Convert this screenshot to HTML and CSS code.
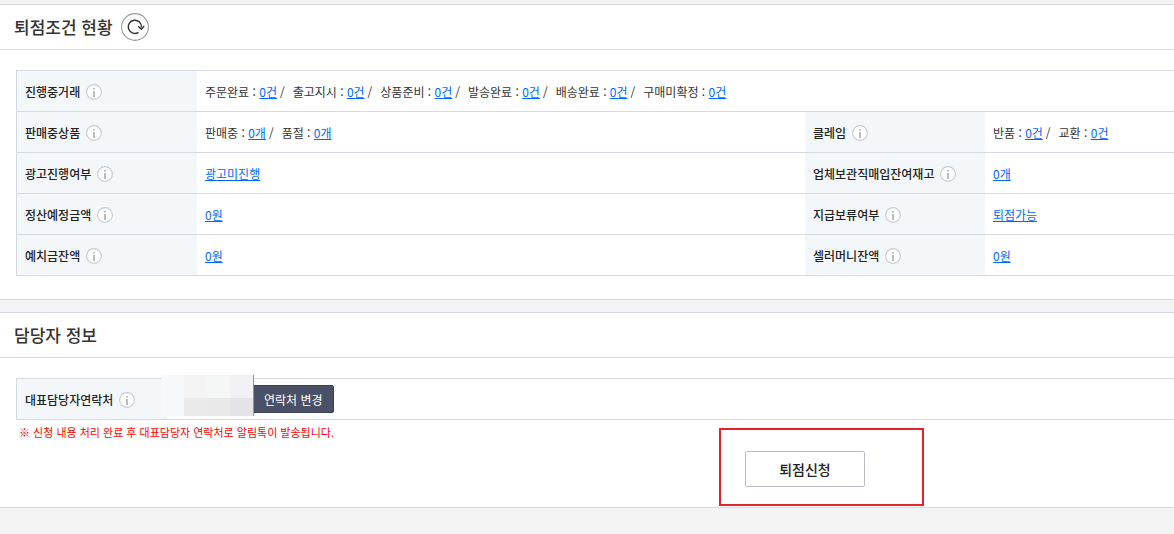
FILE: index.html
```html
<!DOCTYPE html>
<html lang="ko">
<head>
    <meta charset="UTF-8">
    <meta name="viewport" content="width=device-width, initial-scale=1.0">
    <title>퇴점조건 현황</title>
    <link rel="stylesheet" href="styles.css">
</head>
<body>
    <svg class="symbols" aria-hidden="true">
        <symbol id="info" viewBox="0 0 16 16">
            <circle cx="8" cy="8" r="7.4" fill="#fff" stroke="#c5cad6" stroke-width="1.1"/>
            <path d="M7 4h2v1.6H7zM7 7h2v6H7z" fill="#bbb"/>
        </symbol>
    </svg>

    <section class="panel">
        <div class="panel-head">
            <h2>퇴점조건 현황</h2>
            <button type="button" class="refresh" aria-label="새로고침">
                <svg width="28" height="28" viewBox="0 0 28 28" fill="none">
                    <circle cx="14" cy="14" r="13.4" stroke="#999" stroke-width="1.1"/>
                    <path d="M17.5 19.3A6.6 6.6 0 1 1 20.4 14.5" stroke="#333" stroke-width="1.4"/>
                    <path d="M17.2 13.2L20.4 16.2L23.2 13" stroke="#333" stroke-width="1.4"/>
                </svg>
            </button>
        </div>
        <div class="panel-body">
            <table class="info-table">
                <colgroup>
                    <col class="col-label">
                    <col class="col-value">
                    <col class="col-label">
                    <col>
                </colgroup>
                <tr>
                    <th scope="row">진행중거래<svg class="tip"><use href="#info"/></svg></th>
                    <td colspan="3">
                        <ul class="counts">
                            <li>주문완료 : <a href="#">0건</a></li>
                            <li>출고지시 : <a href="#">0건</a></li>
                            <li>상품준비 : <a href="#">0건</a></li>
                            <li>발송완료 : <a href="#">0건</a></li>
                            <li>배송완료 : <a href="#">0건</a></li>
                            <li>구매미확정 : <a href="#">0건</a></li>
                        </ul>
                    </td>
                </tr>
                <tr>
                    <th scope="row">판매중상품<svg class="tip"><use href="#info"/></svg></th>
                    <td>
                        <ul class="counts">
                            <li>판매중 : <a href="#">0개</a></li>
                            <li>품절 : <a href="#">0개</a></li>
                        </ul>
                    </td>
                    <th scope="row">클레임<svg class="tip"><use href="#info"/></svg></th>
                    <td>
                        <ul class="counts">
                            <li>반품 : <a href="#">0건</a></li>
                            <li>교환 : <a href="#">0건</a></li>
                        </ul>
                    </td>
                </tr>
                <tr>
                    <th scope="row">광고진행여부<svg class="tip"><use href="#info"/></svg></th>
                    <td><a href="#">광고미진행</a></td>
                    <th scope="row">업체보관직매입잔여재고<svg class="tip"><use href="#info"/></svg></th>
                    <td><a href="#">0개</a></td>
                </tr>
                <tr>
                    <th scope="row">정산예정금액<svg class="tip"><use href="#info"/></svg></th>
                    <td><a href="#">0원</a></td>
                    <th scope="row">지급보류여부<svg class="tip"><use href="#info"/></svg></th>
                    <td><a href="#">퇴점가능</a></td>
                </tr>
                <tr>
                    <th scope="row">예치금잔액<svg class="tip"><use href="#info"/></svg></th>
                    <td><a href="#">0원</a></td>
                    <th scope="row">셀러머니잔액<svg class="tip"><use href="#info"/></svg></th>
                    <td><a href="#">0원</a></td>
                </tr>
            </table>
        </div>
    </section>

    <section class="panel panel-contact">
        <div class="panel-head">
            <h2>담당자 정보</h2>
        </div>
        <div class="panel-body">
            <table class="info-table">
                <colgroup>
                    <col class="col-contact">
                    <col>
                </colgroup>
                <tr>
                    <th scope="row">대표담당자연락처<svg class="tip"><use href="#info"/></svg></th>
                    <td>
                        <div class="contact">
                            <!-- masked phone number -->
                            <svg class="mask" width="93" height="41" shape-rendering="crispEdges">
                                <path d="M0 0h23v41H0z" fill="#f7f8fa"/>
                                <path d="M23 0h23v23H23z" fill="#f4f4f4"/>
                                <path d="M46 0h23v23H46z" fill="#f5f6f6"/>
                                <path d="M69 0h23v23H69z" fill="#f2f2f4"/>
                                <path d="M23 23h23v18H23z" fill="#eaeaea"/>
                                <path d="M46 23h23v18H46z" fill="#e9e9e9"/>
                                <path d="M69 23h23v18H69z" fill="#e4e3e8"/>
                                <path d="M92 0h1v41h-1z" fill="#8f939e"/>
                            </svg>
                            <button type="button" class="btn-dark">연락처 변경</button>
                        </div>
                    </td>
                </tr>
            </table>
            <div class="panel-foot">
                <p class="notice">※ 신청 내용 처리 완료 후 대표담당자 연락처로 알림톡이 발송됩니다.</p>
                <div class="highlight">
                    <button type="button" class="btn-line">퇴점신청</button>
                </div>
            </div>
        </div>
    </section>
</body>
</html>
```
FILE: styles.css
```css
* {
    box-sizing: border-box;
}

body {
    margin: 0;
    padding-top: 4px;
    background-color: #f4f4f4;
    color: #333;
    font-family: "Noto Sans CJK KR", sans-serif;
    font-size: 12px;
    line-height: 20px;
}

button {
    font-family: inherit;
    cursor: pointer;
}

a {
    color: #0068ff;
    text-decoration: underline;
}

.symbols {
    display: none;
}

.panel {
    margin-bottom: 12px;
    border-top: 1px solid #d5d9e0;
    border-bottom: 1px solid #d5d9e0;
    background-color: #fff;
}

.panel-head {
    display: flex;
    align-items: center;
    gap: 8px;
    height: 45px;
    padding-left: 14px;
    border-bottom: 1px solid #d5d9e0;
}

.panel-head h2 {
    margin: 0;
    font-size: 17px;
    font-weight: 500;
    color: #333;
}

.refresh {
    display: flex;
    padding: 0;
    border: 0;
    background: none;
}

.panel-body {
    padding: 20px 0 23px 16px;
}

.info-table {
    width: 100%;
    table-layout: fixed;
    border-collapse: separate;
    border-spacing: 0;
    border-top: 1px solid #d5d9e0;
    border-left: 1px solid #d5d9e0;
}

.info-table th,
.info-table td {
    height: 41px;
    padding: 2px 8px 0;
    border-bottom: 1px solid #d5d9e0;
    text-align: left;
    vertical-align: middle;
}

.info-table th {
    background-color: #f3f7fa;
    color: #222;
    font-weight: 500;
    white-space: nowrap;
}

.col-label {
    width: 180px;
}

.col-value {
    width: 608px;
}

.col-contact {
    width: 150px;
}

.tip {
    width: 16px;
    height: 16px;
    margin-left: 6px;
    vertical-align: -3px;
}

.counts {
    display: flex;
    margin: 0;
    padding: 0;
    list-style: none;
}

.counts li + li::before {
    content: "/";
    margin: 0 8px 0 3px;
}

.contact {
    position: relative;
    display: flex;
    padding-left: 78px;
}

.mask {
    position: absolute;
    left: -14px;
    top: -10px;
}

.btn-dark {
    height: 28px;
    padding: 0 10px;
    border: 1px solid #3a4154;
    border-radius: 2px;
    background-color: #4a5166;
    color: #fff;
    font-size: 12px;
}

.panel-contact .info-table td {
    padding-top: 0;
}

.panel-contact .panel-body {
    padding-bottom: 1px;
}

.panel-foot {
    display: flex;
    align-items: flex-start;
    padding-top: 8px;
}

.notice {
    flex: 0 0 703px;
    margin: 0;
    padding-left: 3px;
    color: #f00;
    font-size: 11px;
    line-height: 8px;
}

.highlight {
    padding: 21px 57px 17px 24px;
    border: 2px solid #e8202a;
}

.btn-line {
    display: block;
    width: 120px;
    height: 36px;
    border: 1px solid #b9bcc2;
    border-radius: 2px;
    background-color: #fff;
    color: #222;
    font-size: 14px;
    font-weight: 500;
}
```
